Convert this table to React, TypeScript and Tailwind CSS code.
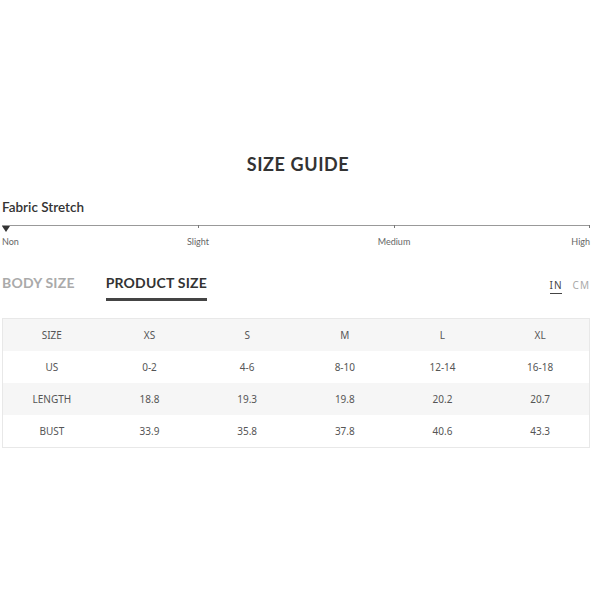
const cols = ["SIZE", "XS", "S", "M", "L", "XL"];
const rows = [
  ["US", "0-2", "4-6", "8-10", "12-14", "16-18"],
  ["LENGTH", "18.8", "19.3", "19.8", "20.2", "20.7"],
  ["BUST", "33.9", "35.8", "37.8", "40.6", "43.3"],
];

export default function App() {
  return (
    <div className="min-h-screen w-[600px] bg-white font-['Lato','Noto_Sans',sans-serif] text-[#333]">
      <div className="pt-[152px] px-[2px] w-[592px]">
        <h1 className="text-center text-[18px] leading-[24px] font-bold tracking-[0.6px] text-[#333] pl-[4px]">SIZE GUIDE</h1>

        {/* fabric stretch */}
        <div className="mt-[22px] text-[13.5px] leading-[18px] font-semibold text-[#333]">Fabric Stretch</div>
        <div className="relative mt-[9px] h-[22px]">
          <div className="h-px bg-[#999]" />
          <div className="absolute left-0 top-[1px] w-0 h-0 border-l-[4px] border-r-[4px] border-t-[6px] border-l-transparent border-r-transparent border-t-[#333]" />
          <div className="absolute left-[196px] top-0 w-px h-[3px] bg-[#777]" />
          <div className="absolute left-[392px] top-0 w-px h-[3px] bg-[#777]" />
          <div className="absolute right-0 top-0 w-px h-[3px] bg-[#777]" />
          <span className="absolute left-0 top-[11px] text-[9px] leading-[12px] text-[#666]">Non</span>
          <span className="absolute left-[196px] -translate-x-1/2 top-[11px] text-[9px] leading-[12px] text-[#666]">Slight</span>
          <span className="absolute left-[392px] -translate-x-1/2 top-[11px] text-[9px] leading-[12px] text-[#666]">Medium</span>
          <span className="absolute right-0 top-[11px] text-[9px] leading-[12px] text-[#666]">High</span>
        </div>

        {/* tabs */}
        <div className="mt-[26px] flex items-start justify-between">
          <div className="flex gap-[31px]">
            <div className="text-[14px] leading-[20px] font-bold tracking-[0.2px] text-[#aaa]">BODY SIZE</div>
            <div className="flex flex-col">
              <div className="text-[14px] leading-[20px] font-bold tracking-[0.2px] text-[#333]">PRODUCT SIZE</div>
              <div className="mt-[5px] h-[3px] bg-[#444]" />
            </div>
          </div>
          <div className="flex gap-[10px] pt-[5px] text-[10px] leading-[14px] tracking-[1px] font-['Noto_Sans',sans-serif]">
            <div className="flex flex-col">
              <span className="text-[#444]">IN</span>
              <div className="h-px bg-[#444] mt-[1px] mr-[1px]" />
            </div>
            <span className="text-[#aaa]">CM</span>
          </div>
        </div>

        {/* table */}
        <div className="mt-[17px] border border-[#e8e8e8] text-[10px] text-[#555] font-['Noto_Sans',sans-serif]">
          <div className="grid grid-cols-6 h-[32px] bg-[#f6f6f6]">
            {cols.map((c) => (
              <div key={c} className="flex items-center justify-center">{c}</div>
            ))}
          </div>
          {rows.map((r, i) => (
            <div key={r[0]} className={`grid grid-cols-6 h-[32px] ${i === 1 ? "bg-[#f6f6f6]" : "bg-white"}`}>
              {r.map((v, j) => (
                <div key={j} className="flex items-center justify-center">{v}</div>
              ))}
            </div>
          ))}
        </div>
      </div>
    </div>
  );
}
